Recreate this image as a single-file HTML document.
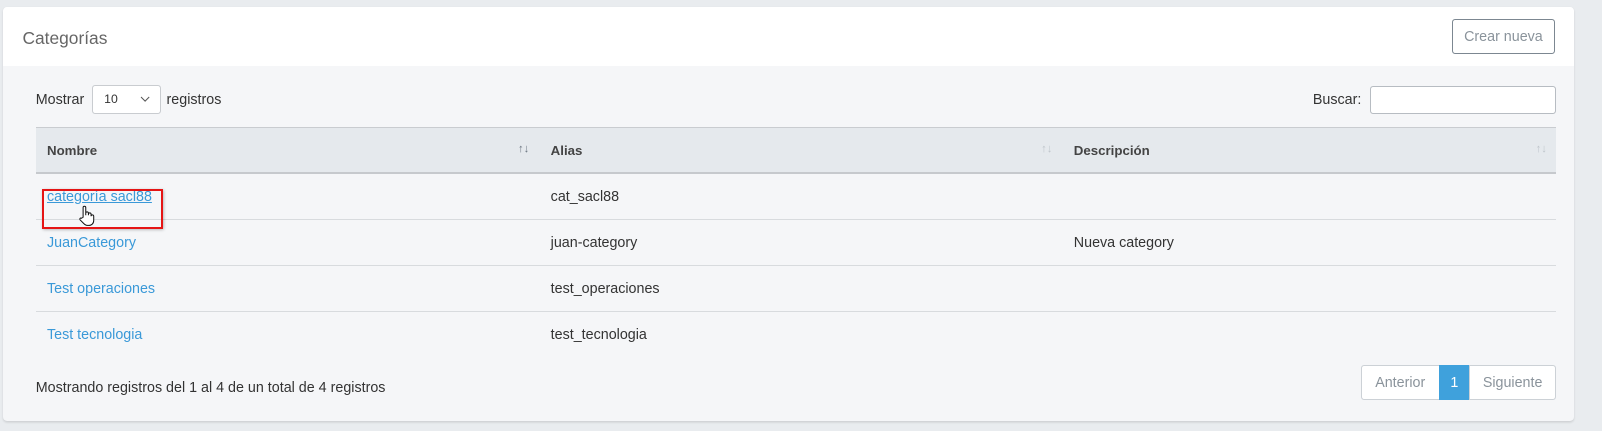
<!DOCTYPE html>
<html><head><meta charset="utf-8"><style>
*{box-sizing:border-box;margin:0;padding:0}
html,body{width:1602px;height:431px;overflow:hidden;background:#e9ecef}
body{font-family:"Liberation Sans",sans-serif;font-size:14px;color:#333;position:relative}
#w{zoom:1.0217;position:relative;width:1568px;height:422px}
.card{position:absolute;left:3px;top:7px;width:1538px;height:405px;background:#f5f6f8;border-radius:4px;box-shadow:0 1px 2px rgba(0,0,0,.12)}
.hd{position:absolute;left:0;top:0;width:100%;height:58px;background:#fff;border-radius:4px 4px 0 0}
.t{position:absolute;left:19px;top:20px;font-size:17px;color:#666}
.btn{position:absolute;left:1418px;top:12px;width:101px;height:34px;border:1px solid #7c8791;border-radius:3px;color:#8a939b;font-size:14px;text-align:center;line-height:34px}
.abs{position:absolute}
.sel{left:90px;top:83px;width:68px;height:29px;border:1px solid #c9ccd0;border-radius:3px;background:#fff;font-size:12px;padding-left:11px;line-height:27px}
.inp{left:1341px;top:84px;width:182px;height:28px;border:1px solid #b7bcc2;border-radius:3px;background:#fff}
.th{position:absolute;top:124px;left:35px;width:1488px;height:46px;background:#e5e9ed;border-top:1px solid #c9ccd0;border-bottom:2px solid #c6c9cd}
.th span{position:absolute;top:15px;font-weight:bold;font-size:13px;color:#444}
.th i{position:absolute;top:15px;font-style:normal;font-size:11px;color:#bfc5cb}
.row{position:absolute;left:35px;width:1488px;height:45px;border-bottom:1px solid #d8dbde}
.row span{position:absolute;top:15px}
a{color:#3a99d8;text-decoration:none}
.pg{position:absolute;top:357px;height:35px;border:1px solid #ccd1d6;background:#fff;color:#8a939b;line-height:35px;font-size:14px;text-align:center}
</style></head><body><div id="w">
<div class="card"><div class="hd"><div class="t">Categorías</div><div class="btn">Crear nueva</div></div></div>
<div class="abs" style="left:35px;top:90px">Mostrar</div>
<div class="abs sel">10<svg style="position:absolute;left:46px;top:10px" width="10" height="6"><path d="M1 1l4 4 4-4" stroke="#555" fill="none"/></svg></div>
<div class="abs" style="left:163px;top:90px">registros</div>
<div class="abs" style="left:1285px;top:90px">Buscar:</div>
<div class="abs inp"></div>
<div class="th"><span style="left:11px">Nombre</span><i style="left:472px;color:#6b7580">↑↓</i><span style="left:504px">Alias</span><i style="left:984px">↑↓</i><span style="left:1016px">Descripción</span><i style="left:1468px">↑↓</i></div>
<div class="row" style="top:170px"><span style="left:11px"><a style="text-decoration:underline">categoría sacl88</a></span><span style="left:504px">cat_sacl88</span></div>
<div class="abs" style="left:41px;top:185px;width:119px;height:39px;border:2px solid #e51515;box-shadow:1px 1px 3px rgba(0,0,0,.3)"></div>
<svg class="abs" style="left:76px;top:201px" width="18" height="22" viewBox="0 0 18 22"><path d="M5 12V2.5a1.3 1.3 0 0 1 2.6 0V10V8a1.3 1.3 0 0 1 2.6 0v2V9a1.3 1.3 0 0 1 2.6 0v2a1.3 1.3 0 0 1 2.6 0v4c0 3-2 5-4.5 5H9c-1.5 0-2.5-1-3.5-2L2 14.5c-.8-.9.3-2.2 1.3-1.5z" fill="#fff" stroke="#111" stroke-width="1"/></svg>
<div class="row" style="top:215px"><span style="left:11px"><a>JuanCategory</a></span><span style="left:504px">juan-category</span><span style="left:1016px">Nueva category</span></div>
<div class="row" style="top:260px"><span style="left:11px"><a>Test operaciones</a></span><span style="left:504px">test_operaciones</span></div>
<div class="row" style="top:305px;border-bottom:none"><span style="left:11px"><a>Test tecnologia</a></span><span style="left:504px">test_tecnologia</span></div>
<div class="abs" style="left:35px;top:372px">Mostrando registros del 1 al 4 de un total de 4 registros</div>
<div class="pg" style="left:1332px;width:77px;border-radius:3px 0 0 3px">Anterior</div>
<div class="pg" style="left:1408px;width:31px;background:#3fa1dc;border-color:#3fa1dc;color:#fff">1</div>
<div class="pg" style="left:1438px;width:85px;border-radius:0 3px 3px 0">Siguiente</div>
</div></body></html>
